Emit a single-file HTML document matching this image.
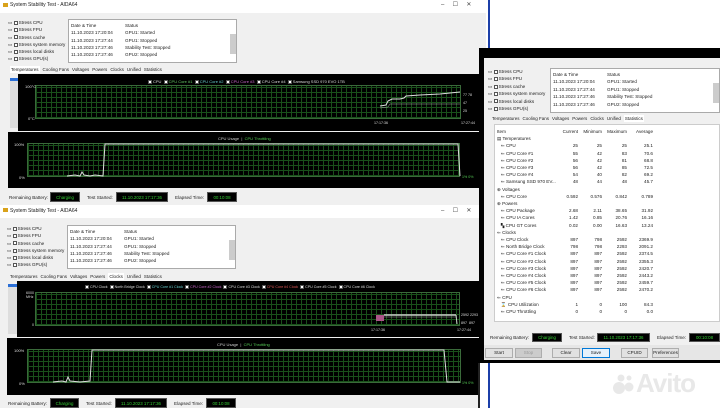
<!DOCTYPE html><html><head><meta charset="utf-8"><style>
*{margin:0;padding:0;box-sizing:border-box}
body{width:720px;height:408px;overflow:hidden;background:#fff;position:relative;font-family:"Liberation Sans",sans-serif;font-size:4.6px;color:#222}
.a{position:absolute;white-space:nowrap}
.win{position:absolute;background:#f0f0f0;overflow:hidden}
.blk{position:absolute;background:#000}
.grid{position:absolute;background-color:#000;background-image:repeating-linear-gradient(90deg,#19501a 0 1px,transparent 1px 5px),repeating-linear-gradient(0deg,#19501a 0 1px,transparent 1px 5px);border:1px solid #3a6a3a}
.cb{display:inline-block;width:4px;height:4px;border:0.6px solid #555;background:#fff;vertical-align:middle;margin-right:1px}
.log{position:absolute;background:#fff;border:1px solid #aaa}
.box{position:absolute;background:#000;color:#3c3;text-align:center;line-height:9px;font-size:4.4px;border:1px solid #555}
.btn{position:absolute;background:#e1e1e1;border:1px solid #adadad;text-align:center;line-height:8px}
.tabs span{margin-right:3px}
.lg{color:#ddd}
</style></head><body>

<div class="a" style="left:488px;top:0;width:2px;height:408px;background:#1c3fa8"></div>

<!-- TOP WINDOW -->
<div class="win" style="left:0;top:0;width:486px;height:205px;background:#f0f0f0">
 <div class="a" style="left:0;top:0;width:486px;height:13px;background:#fff"></div>
 <div class="a" style="left:3px;top:3px;width:5px;height:4px;background:#d9a21b"></div>
 <div class="a" style="left:10px;top:2px;font-size:5px">System Stability Test - AIDA64</div>
 <div class="a" style="left:441px;top:1px;font-size:6px;color:#444">–&nbsp;&nbsp;&nbsp;&nbsp;&nbsp;☐&nbsp;&nbsp;&nbsp;&nbsp;&nbsp;✕</div>
 <div class="a" style="left:8px;top:19px;line-height:7.3px">▭ <span class="cb"></span>Stress CPU<br>▭ <span class="cb"></span>Stress FPU<br>▭ <span class="cb"></span>Stress cache<br>▭ <span class="cb"></span>Stress system memory<br>▭ <span class="cb"></span>Stress local disks<br>▭ <span class="cb"></span>Stress GPU(s)</div>
 <div class="log" style="left:68px;top:19px;width:169px;height:44px">
  <div class="a" style="left:2px;top:2px;line-height:7.3px">Date &amp; Time<br>11.10.2023 17:20:04<br>11.10.2023 17:27:44<br>11.10.2023 17:27:46<br>11.10.2023 17:27:46</div>
  <div class="a" style="left:56px;top:2px;line-height:7.3px">Status<br>GPU1: Started<br>GPU1: Stopped<br>Stability Test: Stopped<br>GPU2: Stopped</div>
  <div class="a" style="left:0;top:30px;width:160px;height:7px;background:#e8e8e8;z-index:-1"></div>
  <div class="a" style="left:161px;top:14px;width:6px;height:20px;background:#ccc"></div>
 </div>
 <div class="a tabs" style="left:10px;top:67px;font-size:4.5px"><span style="background:#fff;padding:1px">Temperatures</span><span>Cooling Fans</span><span>Voltages</span><span>Powers</span><span>Clocks</span><span>Unified</span><span>Statistics</span></div>
 <div class="a" style="left:10px;top:78px;width:8px;height:3px;background:#2b6fd6"></div>
 <div class="a" style="left:10px;top:81px;width:8px;height:47px;background:#ddd"></div>
 <div class="blk" style="left:18px;top:74px;width:468px;height:57px"></div>
 <div class="a lg" style="left:148px;top:79px;font-size:4px"><span class="cb"></span>CPU &nbsp;<span class="cb"></span><span style="color:#6c6">CPU Core #1</span> &nbsp;<span class="cb"></span><span style="color:#6cc">CPU Core #2</span> &nbsp;<span class="cb"></span><span style="color:#c6c">CPU Core #3</span> &nbsp;<span class="cb"></span>CPU Core #4 &nbsp;<span class="cb"></span>Samsung SSD 970 EVO 1TB</div>
 <div class="grid" style="left:35px;top:85px;width:426px;height:34px"></div>
 <div class="a lg" style="left:25px;top:84px;font-size:4px">100°C</div>
 <div class="a lg" style="left:28px;top:116px;font-size:4px">0°C</div>
 <div class="a lg" style="left:374px;top:121px;font-size:3.6px">17:17:36</div>
 <div class="a lg" style="left:461px;top:121px;font-size:3.6px">17:27:44</div>
 <div class="a lg" style="left:463px;top:93px;font-size:3.6px">77 78<br><br>47<br><br>25</div>
 <svg class="a" style="left:0;top:0" width="486" height="205"><polyline points="380,106 386,105 388,101 392,99 400,99 404,98 406,96 420,95 440,94 460,92" fill="none" stroke="#ddd" stroke-width="1"/><polyline points="380,108 388,107 390,104 460,104" fill="none" stroke="#aaa" stroke-width=".5"/></svg>
 <div class="blk" style="left:8px;top:132px;width:478px;height:56px"></div>
 <div class="a" style="left:218px;top:136px;font-size:4px;color:#ccc">CPU Usage &nbsp;|&nbsp; <span style="color:#5c5">CPU Throttling</span></div>
 <div class="grid" style="left:27px;top:143px;width:433px;height:34px"></div>
 <div class="a lg" style="left:14px;top:142px;font-size:4px">100%</div>
 <div class="a lg" style="left:19px;top:175px;font-size:4px">0%</div>
 <div class="a" style="left:462px;top:175px;font-size:3.6px;color:#5c5">1% 0%</div>
 <svg class="a" style="left:0;top:0" width="486" height="205"><polyline points="67,176 75,175 80,176 82,172 84,175 90,176 95,175 103,176 105,144 458,144 460,176" fill="none" stroke="#ddd" stroke-width="1"/></svg>
 <div class="a" style="left:9px;top:195px">Remaining Battery:</div><div class="box" style="left:50px;top:192px;width:30px;height:10px">Charging</div>
 <div class="a" style="left:87px;top:195px">Test Started:</div><div class="box" style="left:116px;top:192px;width:52px;height:10px">11.10.2023 17:17:36</div>
 <div class="a" style="left:175px;top:195px">Elapsed Time:</div><div class="box" style="left:207px;top:192px;width:30px;height:10px">00:10:08</div>
</div>

<!-- LOWER WINDOW -->
<div class="win" style="left:0;top:205px;width:480px;height:203px">
 <div class="a" style="left:0;top:0;width:480px;height:13px;background:#fff"></div>
 <div class="a" style="left:3px;top:3px;width:5px;height:4px;background:#d9a21b"></div>
 <div class="a" style="left:10px;top:3px;font-size:5px">System Stability Test - AIDA64</div>
 <div class="a" style="left:441px;top:2px;font-size:6px;color:#444">–&nbsp;&nbsp;&nbsp;&nbsp;&nbsp;☐&nbsp;&nbsp;&nbsp;&nbsp;&nbsp;✕</div>
 <div class="a" style="left:7px;top:20px;line-height:7.3px">▭ <span class="cb"></span>Stress CPU<br>▭ <span class="cb"></span>Stress FPU<br>▭ <span class="cb"></span>Stress cache<br>▭ <span class="cb"></span>Stress system memory<br>▭ <span class="cb"></span>Stress local disks<br>▭ <span class="cb"></span>Stress GPU(s)</div>
 <div class="log" style="left:67px;top:20px;width:169px;height:44px">
  <div class="a" style="left:2px;top:2px;line-height:7.3px">Date &amp; Time<br>11.10.2023 17:20:04<br>11.10.2023 17:27:44<br>11.10.2023 17:27:46<br>11.10.2023 17:27:46</div>
  <div class="a" style="left:56px;top:2px;line-height:7.3px">Status<br>GPU1: Started<br>GPU1: Stopped<br>Stability Test: Stopped<br>GPU2: Stopped</div>
  <div class="a" style="left:161px;top:14px;width:6px;height:20px;background:#ccc"></div>
 </div>
 <div class="a tabs" style="left:10px;top:69px;font-size:4.5px"><span>Temperatures</span><span>Cooling Fans</span><span>Voltages</span><span>Powers</span><span style="background:#fff;padding:1px">Clocks</span><span>Unified</span><span>Statistics</span></div>
 <div class="a" style="left:8px;top:79px;width:9px;height:3px;background:#2b6fd6"></div>
 <div class="a" style="left:8px;top:82px;width:9px;height:47px;background:#ddd"></div>
 <div class="blk" style="left:17px;top:76px;width:463px;height:56px"></div>
 <div class="a lg" style="left:85px;top:80px;font-size:3.6px"><span class="cb"></span>CPU Clock &nbsp;<span class="cb"></span>North Bridge Clock &nbsp;<span class="cb"></span><span style="color:#6cc">CPU Core #1 Clock</span> &nbsp;<span class="cb"></span><span style="color:#c6c">CPU Core #2 Clock</span> &nbsp;<span class="cb"></span>CPU Core #3 Clock &nbsp;<span class="cb"></span><span style="color:#d55">CPU Core #4 Clock</span> &nbsp;<span class="cb"></span>CPU Core #5 Clock &nbsp;<span class="cb"></span>CPU Core #6 Clock</div>
 <div class="grid" style="left:35px;top:87px;width:425px;height:34px"></div>
 <div class="a lg" style="left:26px;top:86px;font-size:3.6px">6000<br>MHz</div>
 <div class="a lg" style="left:32px;top:118px;font-size:3.6px">0</div>
 <div class="a lg" style="left:371px;top:123px;font-size:3.6px">17:17:36</div>
 <div class="a lg" style="left:457px;top:123px;font-size:3.6px">17:27:44</div>
 <div class="a lg" style="left:461px;top:108px;font-size:3.6px">2592 2293<br><br>897 &nbsp;897</div>
 <svg class="a" style="left:0;top:0" width="480" height="203"><rect x="376" y="110" width="8" height="6" fill="#a58"/><polyline points="384,110 456,110" stroke="#ccc" stroke-width="1.5"/><polyline points="384,112 456,112" stroke="#999" stroke-width=".6"/><line x1="456" y1="110" x2="457" y2="119" stroke="#ccc"/></svg>
 <div class="blk" style="left:7px;top:133px;width:473px;height:57px"></div>
 <div class="a" style="left:217px;top:137px;font-size:4px;color:#ccc">CPU Usage &nbsp;|&nbsp; <span style="color:#5c5">CPU Throttling</span></div>
 <div class="grid" style="left:27px;top:144px;width:434px;height:34px"></div>
 <div class="a lg" style="left:14px;top:143px;font-size:4px">100%</div>
 <div class="a lg" style="left:19px;top:176px;font-size:4px">0%</div>
 <div class="a" style="left:462px;top:176px;font-size:3.6px;color:#5c5">1% 0%</div>
 <svg class="a" style="left:0;top:0" width="480" height="203"><polyline points="53,177 62,176 66,177 68,172 70,176 80,177 90,176 92,145 444,145 447,177 460,177" fill="none" stroke="#ddd" stroke-width="1"/></svg>
 <div class="a" style="left:8px;top:196px">Remaining Battery:</div><div class="box" style="left:50px;top:193px;width:29px;height:10px">Charging</div>
 <div class="a" style="left:86px;top:196px">Test Started:</div><div class="box" style="left:115px;top:193px;width:52px;height:10px">11.10.2023 17:17:36</div>
 <div class="a" style="left:174px;top:196px">Elapsed Time:</div><div class="box" style="left:206px;top:193px;width:30px;height:10px">00:10:08</div>
</div>

<!-- RIGHT WINDOW -->
<div class="blk" style="left:479px;top:48px;width:241px;height:315px"></div>
<div class="win" style="left:484px;top:58px;width:236px;height:302px">
 <div class="a" style="left:4px;top:10px;line-height:7.4px">▭ <span class="cb"></span>Stress CPU<br>▭ <span class="cb"></span>Stress FPU<br>▭ <span class="cb"></span>Stress cache<br>▭ <span class="cb"></span>Stress system memory<br>▭ <span class="cb"></span>Stress local disks<br>▭ <span class="cb"></span>Stress GPU(s)</div>
 <div class="log" style="left:66px;top:10px;width:170px;height:45px">
  <div class="a" style="left:2px;top:2px;line-height:7.4px">Date &amp; Time<br>11.10.2023 17:20:04<br>11.10.2023 17:27:44<br>11.10.2023 17:27:46<br>11.10.2023 17:27:46</div>
  <div class="a" style="left:56px;top:2px;line-height:7.4px">Status<br>GPU1: Started<br>GPU1: Stopped<br>Stability Test: Stopped<br>GPU2: Stopped</div>
  <div class="a" style="left:162px;top:14px;width:6px;height:20px;background:#ccc"></div>
 </div>
 <div class="a tabs" style="left:8px;top:58px;font-size:4.5px"><span>Temperatures</span><span>Cooling Fans</span><span>Voltages</span><span>Powers</span><span>Clocks</span><span>Unified</span><span style="background:#fff;padding:1px">Statistics</span></div>
 <div class="a" style="left:10px;top:66px;width:226px;height:198px;background:#fff;border:1px solid #ccc"></div>
 <div class="a" style="left:13px;top:70px;line-height:7.2px">Item<br>▤ Temperatures<br>&nbsp;&nbsp;&nbsp;⇐ CPU<br>&nbsp;&nbsp;&nbsp;⇐ CPU Core #1<br>&nbsp;&nbsp;&nbsp;⇐ CPU Core #2<br>&nbsp;&nbsp;&nbsp;⇐ CPU Core #3<br>&nbsp;&nbsp;&nbsp;⇐ CPU Core #4<br>&nbsp;&nbsp;&nbsp;⇐ Samsung SSD 970 EV...<br>⊕ Voltages<br>&nbsp;&nbsp;&nbsp;⇐ CPU Core<br>⊕ Powers<br>&nbsp;&nbsp;&nbsp;⇐ CPU Package<br>&nbsp;&nbsp;&nbsp;⇐ CPU IA Cores<br>&nbsp;&nbsp;&nbsp;▚ CPU GT Cores<br>⇐ Clocks<br>&nbsp;&nbsp;&nbsp;⇐ CPU Clock<br>&nbsp;&nbsp;&nbsp;⇐ North Bridge Clock<br>&nbsp;&nbsp;&nbsp;⇐ CPU Core #1 Clock<br>&nbsp;&nbsp;&nbsp;⇐ CPU Core #2 Clock<br>&nbsp;&nbsp;&nbsp;⇐ CPU Core #3 Clock<br>&nbsp;&nbsp;&nbsp;⇐ CPU Core #4 Clock<br>&nbsp;&nbsp;&nbsp;⇐ CPU Core #5 Clock<br>&nbsp;&nbsp;&nbsp;⇐ CPU Core #6 Clock<br>⇐ CPU<br>&nbsp;&nbsp;&nbsp;⌛ CPU Utilization<br>&nbsp;&nbsp;&nbsp;⇐ CPU Throttling</div>
 <div class="a" style="left:70px;top:70px;width:24px;text-align:right;line-height:7.2px">Current<br><br>25<br>55<br>56<br>56<br>54<br>48<br><br>0.592<br><br>2.68<br>1.42<br>0.02<br><br>897<br>798<br>897<br>897<br>897<br>897<br>897<br>897<br><br>1<br>0</div>
 <div class="a" style="left:94px;top:70px;width:24px;text-align:right;line-height:7.2px">Minimum<br><br>25<br>42<br>42<br>42<br>40<br>44<br><br>0.576<br><br>2.11<br>0.85<br>0.00<br><br>798<br>798<br>897<br>897<br>897<br>897<br>897<br>897<br><br>0<br>0</div>
 <div class="a" style="left:118px;top:70px;width:25px;text-align:right;line-height:7.2px">Maximum<br><br>25<br>83<br>81<br>85<br>82<br>48<br><br>0.842<br><br>38.65<br>20.76<br>16.63<br><br>2592<br>2293<br>2592<br>2592<br>2592<br>2592<br>2592<br>2592<br><br>100<br>0</div>
 <div class="a" style="left:144px;top:70px;width:25px;text-align:right;line-height:7.2px">Average<br><br>25.1<br>70.6<br>68.8<br>72.5<br>69.2<br>45.7<br><br>0.789<br><br>31.92<br>16.16<br>13.24<br><br>2369.9<br>2091.2<br>2374.5<br>2355.3<br>2420.7<br>2443.2<br>2459.7<br>2470.2<br><br>84.3<br>0.0</div>
 <div class="a" style="left:6px;top:277px">Remaining Battery:</div><div class="box" style="left:48px;top:275px;width:30px;height:9px;line-height:7px">Charging</div>
 <div class="a" style="left:85px;top:277px">Test Started:</div><div class="box" style="left:113px;top:275px;width:53px;height:9px;line-height:7px">11.10.2023 17:17:36</div>
 <div class="a" style="left:173px;top:277px">Elapsed Time:</div><div class="box" style="left:205px;top:275px;width:31px;height:9px;line-height:7px">00:10:08</div>
 <div class="a" style="left:0;top:287px;width:236px;height:15px;background:#e6e6e6"></div>
 <div class="btn" style="left:1px;top:290px;width:28px;height:10px">Start</div>
 <div class="btn" style="left:31px;top:290px;width:27px;height:10px;color:#999;background:#ccc">Stop</div>
 <div class="btn" style="left:68px;top:290px;width:28px;height:10px">Clear</div>
 <div class="btn" style="left:98px;top:290px;width:28px;height:10px;background:#e5f1fb;border-color:#0078d7">Save</div>
 <div class="btn" style="left:137px;top:290px;width:27px;height:10px">CPUID</div>
 <div class="btn" style="left:168px;top:290px;width:27px;height:10px">Preferences</div>
</div>
<div class="a" style="left:478px;top:363px;width:2px;height:45px;background:#222"></div>
<!-- Avito watermark -->
<svg class="a" style="left:612px;top:372px" width="24" height="24"><circle cx="7" cy="16" r="6" fill="#e8e8e8"/><circle cx="17" cy="15" r="4.5" fill="#e8e8e8"/><circle cx="9" cy="6" r="3.5" fill="#e8e8e8"/><circle cx="17" cy="6" r="2.5" fill="#e8e8e8"/></svg>
<div class="a" style="left:636px;top:368px;font-size:26px;font-weight:bold;color:#e8e8e8;letter-spacing:-1px">Avito</div>
</body></html>
